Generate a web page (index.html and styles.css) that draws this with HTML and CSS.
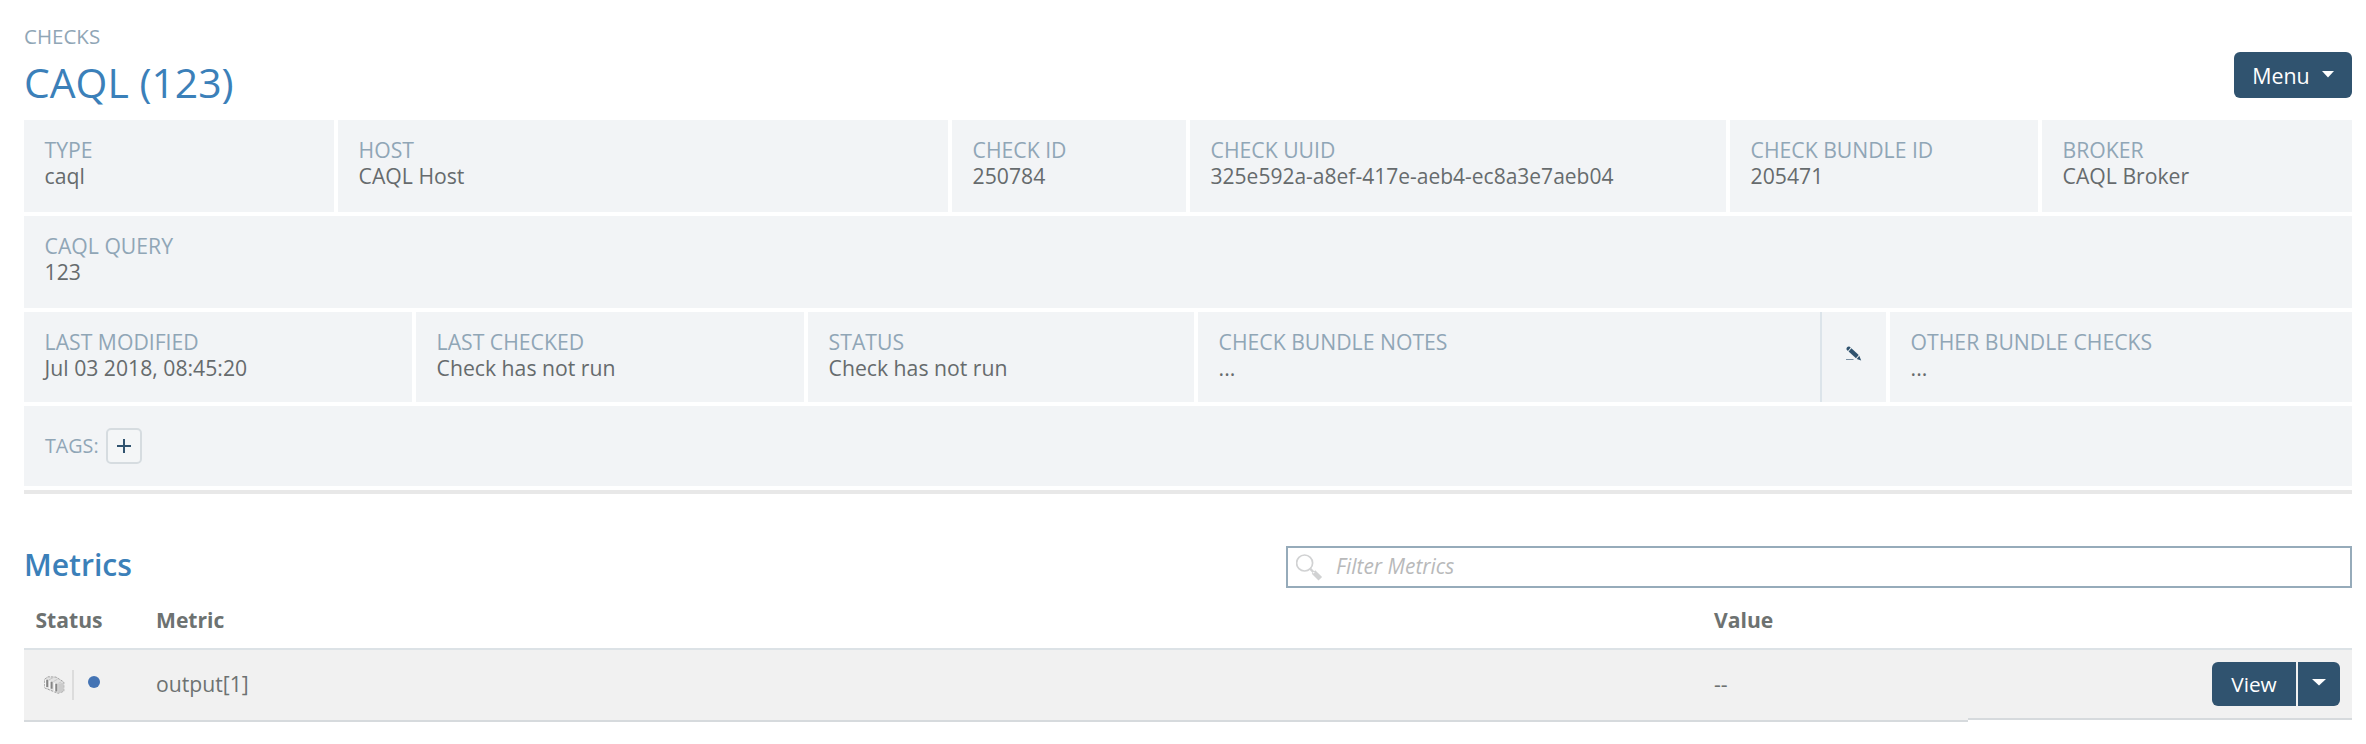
FILE: index.html
```
<!DOCTYPE html>
<html lang="en">
<head>
<meta charset="utf-8">
<title>CAQL (123)</title>
<link rel="stylesheet" href="styles.css">
</head>
<body>
<header class="header">
  <div>
    <div class="crumb">CHECKS</div>
    <h1 class="title">CAQL (123)</h1>
  </div>
  <button class="btn menu">Menu<svg class="caret" width="12" height="7" viewBox="0 0 12 7"><path d="M0 0h12L6 6.5z" fill="#fff"/></svg></button>
</header>

<section class="details">
  <div class="row row-a">
    <div class="cell"><div class="label">TYPE</div><div>caql</div></div>
    <div class="cell"><div class="label">HOST</div><div>CAQL Host</div></div>
    <div class="cell"><div class="label">CHECK ID</div><div>250784</div></div>
    <div class="cell"><div class="label">CHECK UUID</div><div class="uuid">325e592a-a8ef-417e-aeb4-ec8a3e7aeb04</div></div>
    <div class="cell"><div class="label">CHECK BUNDLE ID</div><div>205471</div></div>
    <div class="cell"><div class="label">BROKER</div><div>CAQL Broker</div></div>
  </div>
  <div class="row row-b">
    <div class="cell"><div class="label">CAQL QUERY</div><div>123</div></div>
  </div>
  <div class="row row-c">
    <div class="cell"><div class="label">LAST MODIFIED</div><div>Jul 03 2018, 08:45:20</div></div>
    <div class="cell"><div class="label">LAST CHECKED</div><div>Check has not run</div></div>
    <div class="cell"><div class="label">STATUS</div><div>Check has not run</div></div>
    <div class="cell notes">
      <div><div class="label">CHECK BUNDLE NOTES</div><div>...</div></div>
      <div class="edit"><svg width="16" height="15" viewBox="0 0 16 15"><g fill="#30536f"><path d="M.6 3.600C-.2 2.300 1.700 0 3.300.6l1.400 1L1.900 4.900z"/><path d="M2.600 5.500 5.400 2.300l7.300 6.600-2.700 3.300z"/><path d="M13.300 9.700l1.900 4.800-4.500-1.600z"/></g><path d="M0 13.500h7.500" stroke="#7a90a3"/></svg></div>
    </div>
    <div class="cell"><div class="label">OTHER BUNDLE CHECKS</div><div>...</div></div>
  </div>
  <div class="row tags">
    <span class="tags-label">TAGS:</span>
    <button class="add"><svg width="14" height="14" viewBox="0 0 14 14"><path d="M0 7h14M7 0v14" stroke="#30536f" stroke-width="2"/></svg></button>
  </div>
</section>

<section class="metrics">
  <div class="metrics-head">
    <h2 class="subtitle">Metrics</h2>
    <div class="search">
      <svg width="27" height="27" viewBox="0 0 27 27" fill="none" stroke="#d1d2d3"><circle cx="8.600" cy="9" r="8" stroke-width="1.700"/><path d="M14 14.500l4 4.300" stroke-width="2.400"/><path d="M17.500 18l6.800 6.800" stroke-width="5"/><path d="M17.300 18.200l.8.800" stroke="#fff" stroke-width="1.500"/></svg>
      <span>Filter Metrics</span>
    </div>
  </div>
  <div class="table">
    <div class="tr th"><div class="status-th">Status</div><div>Metric</div><div>Value</div><div></div></div>
    <div class="tr td">
      <div class="status">
        <svg width="21" height="18" viewBox="0 0 21 18"><path d="M.7 3.200 4 .8l8 .3L19.800 6v9.300L14 17.300.8 12z" fill="#e2e2e2" stroke="#999" stroke-width=".9" stroke-dasharray="2.500 1"/><path d="M14.200 8l5.400-1.600v8.500l-5.400 1.700z" fill="#cbcbcb"/><path d="M1.800 3.500v8M5.900 5v8M10.600 7v8.500" stroke="#f8f8f8" stroke-width="1.500"/><path d="M3.200 3.700v7.300M7.600 5.800v7M12.300 7.800v7.700" stroke="#858585" stroke-width="2"/><path d="M5 3.800l4-2.100M9.500 5.500l4-2.300M14.300 7.300l3.200-1.500" stroke="#c7c7c7"/></svg>
        <span class="sep"></span><span class="dot"></span>
      </div>
      <div>output[1]</div>
      <div>--</div>
      <div class="actions">
        <button class="btn view">View</button><button class="btn drop"><svg width="14" height="7" viewBox="0 0 14 7"><path d="M0 0h14L7 6.500z" fill="#fff"/></svg></button>
      </div>
    </div>
  </div>
</section>
</body>
</html>
```
FILE: styles.css
```
* { box-sizing: border-box; }
body {
  margin: 0;
  padding: 0 14px 0 24px;
  background: #fff;
  color: #6d7271;
  font: 21.2px/26px "Open Sans", sans-serif;
}
h1, h2 { margin: 0; }
button { font: inherit; padding: 0; margin: 0; border: 0; }
svg { display: block; }

.header { display: flex; justify-content: space-between; height: 120px; }
.crumb { padding-top: 23px; color: #90a6b6; font-size: 20.5px; line-height: 26px; }
.title { padding-top: 4px; color: #3b80b9; font-size: 40.9px; font-weight: 400; line-height: 58px; }
.btn {
  display: flex;
  align-items: center;
  justify-content: center;
  background: #30536f;
  color: #fff;
  border-radius: 6px;
}
.menu { width: 118px; height: 46px; margin-top: 52px; padding-top: 2px; gap: 12px; font-size: 21.4px; font-weight: 500; }
.caret { margin-bottom: 3px; }

.details { display: grid; gap: 4px; padding-bottom: 4px; border-bottom: 4px solid #e8e8e8; }
.row { display: grid; gap: 4px; color: #666b6d; }
.row-a { grid-template-columns: 310px 610px 234px 536px 308px 310px; height: 92px; }
.row-b { height: 92px; }
.row-c { grid-template-columns: 388px 388px 386px 688px 462px; height: 90px; }
.cell { background: #f2f4f6; padding: 17px 20px 0 20.6px; white-space: nowrap; }
.label { color: #90a6b6; }
.uuid { font-size: 21px; }
.notes { display: flex; justify-content: space-between; padding: 0 0 0 20.6px; }
.notes > :first-child { padding-top: 17px; }
.edit { width: 66px; border-left: 2px solid #dce4ea; padding: 34px 0 0 24px; }
.tags { display: flex; align-items: center; gap: 8px; height: 80px; padding-left: 21px; background: #f2f4f6; }
.tags-label { width: 53px; color: #90a6b6; font-size: 19.7px; }
.add {
  display: grid;
  place-items: center;
  width: 36px;
  height: 36px;
  border: 2px solid #d6dce0;
  border-radius: 5px;
  background: #f4f6f7;
}

.metrics { padding-top: 52px; }
.metrics-head { display: flex; justify-content: space-between; height: 42px; }
.subtitle { color: #3b80b9; font-size: 30.1px; font-weight: 600; line-height: 38px; }
.search {
  display: flex;
  gap: 13px;
  width: 1066px;
  height: 42px;
  padding: 6px 0 0 8px;
  border: 2px solid #96abba;
  color: #b8b9ba;
  font-size: 20.9px;
  font-style: italic;
}
.search span { margin-top: -1px; }
.tr { display: grid; grid-template-columns: 132px 1558px 254px 384px; }
.th { height: 60px; padding-top: 19px; font-size: 21.1px; font-weight: 700; }
.status-th { padding-left: 11.5px; }
.td { height: 74px; border-top: 2px solid #dce2e6; }
.td > div { height: 72px; padding-top: 21px; background: #f1f1f1; border-bottom: 2px solid #d6dadd; }
.td > .status { display: flex; padding: 20px 0 0 20px; }
.status svg { margin-top: 6px; }
.sep { width: 2px; height: 30px; margin-left: 7px; background: #dcdcdc; }
.dot { width: 12px; height: 12px; margin: 6px 0 0 14px; border-radius: 50%; background: #4474b4; }
.td > .actions { display: flex; justify-content: flex-end; gap: 2px; height: 70px; padding: 12px 12px 0 0; }
.view { width: 84px; height: 44px; border-radius: 6px 0 0 6px; font-size: 20.8px; font-weight: 500; }
.drop { width: 42px; height: 44px; padding-bottom: 3px; border-radius: 0 6px 6px 0; }
```
